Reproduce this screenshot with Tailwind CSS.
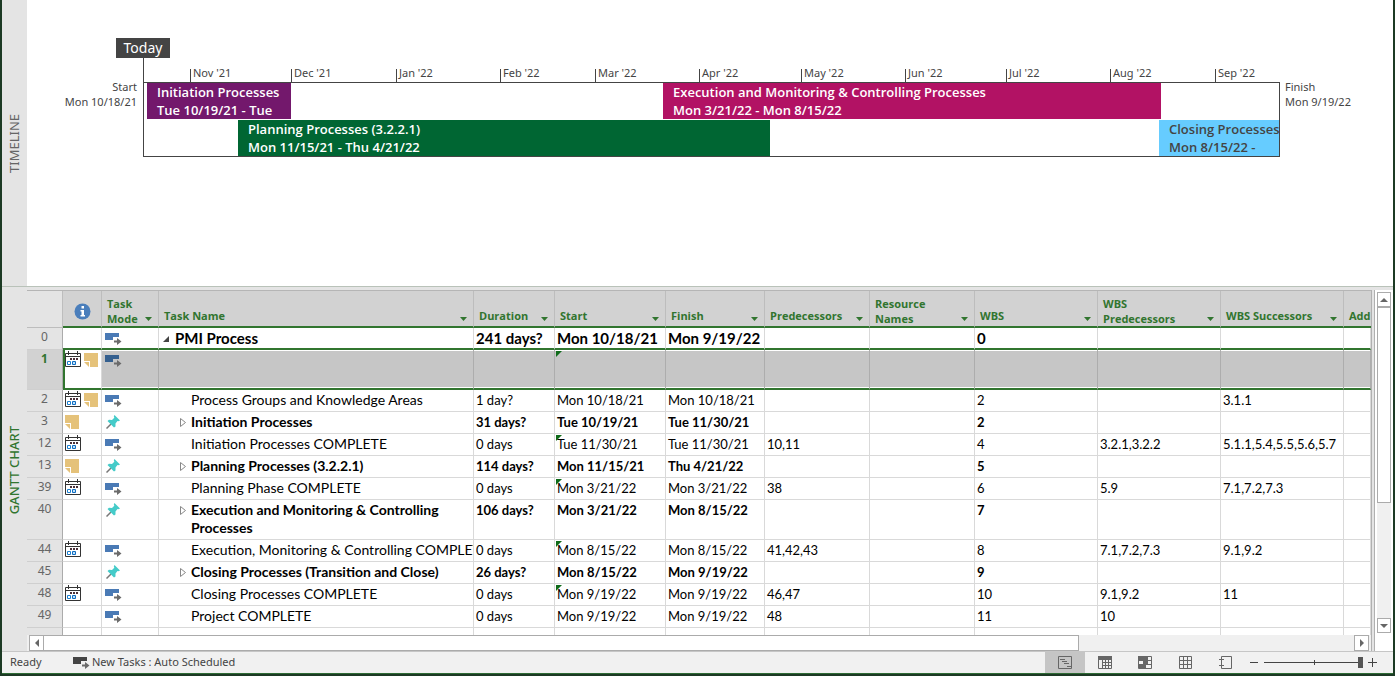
<!DOCTYPE html>
<html lang="en">
<head>
<meta charset="utf-8">
<title>Project plan</title>
<script src="https://cdn.jsdelivr.net/npm/@tailwindcss/browser@4"></script>
</head>
<body class="bg-[#1c3a24] font-['Noto_Sans','Open_Sans',sans-serif] text-[#444]">
<svg class="hidden" aria-hidden="true">
  <symbol id="cal" viewBox="0 0 16 16">
    <path d="M.5 2.5h15v13H.5zM.5 5.500h15" fill="#fff" stroke="#333"/>
    <path d="M3.500 0v4M12.500 0v4" stroke="#333"/>
    <path d="M5 7h2v2H5zM8 7h2v2H8zM11 7h2v2h-2z" fill="#4a3038"/>
    <path d="M2.500 10.500h3v3h-3z" fill="#fff" stroke="#1a7fd0"/><path d="M7.500 10.500h3v3h-3z" fill="#bfe0f8" stroke="#0f6cc0"/>
  </symbol>
  <symbol id="note" viewBox="0 0 14 14">
    <path d="M0 0h14v14H6V8H0z" fill="#e5c27a"/><path d="M0 9h5v5z" fill="#e5c27a"/>
  </symbol>
  <symbol id="auto" viewBox="0 0 17 12">
    <path d="M0 0h14v4H8v3H0z" fill="currentColor"/>
    <path d="M9 7.500h3V5L16.500 8.500 12 12V9.500H9z" fill="#6b6b6b"/>
  </symbol>
  <symbol id="pin" viewBox="0 0 14 14">
    <path d="M.500 13.500 5 9" stroke="#777" stroke-width="1.500"/>
    <path d="M8.500 0 14 5.500 12.500 6.200 11.500 6 9.500 8.500V11.500L8 12.500 1.500 6 3 4.800 6 5 8.300 2.800 7.800 1.200z" fill="#45cbc9"/>
  </symbol>
</svg>
<div class="mx-0.5 flex h-[calc(100vh-2px)] flex-col border-b border-[#2f6b35] bg-[#e4e4e4]">
  <section aria-label="Timeline" class="flex h-[286px] shrink-0 bg-white">
    <div class="flex w-[25px] items-center justify-center bg-[#e4e4e4] pr-0.5">
      <h2 class="rotate-180 text-[13px] leading-4 text-[#666] [writing-mode:vertical-rl]">TIMELINE</h2>
    </div>
    <div class="flex-1 pt-[38px]">
      <div class="pl-[89px]"><div class="flex h-5 w-[54px] items-center justify-center bg-[#444] text-sm text-white">Today</div></div>
      <div class="flex">
        <div class="w-[116px] pt-[21px] pr-1.5 text-right text-[11px] leading-[15px]">Start<br>Mon 10/18/21</div>
        <div class="min-w-0 flex-1 border-l border-[#444]">
          <div class="grid grid-cols-[46fr_101fr_105fr_104fr_95fr_104fr_102fr_104fr_101fr_104fr_105fr_65fr] pt-[11px] text-[11px] leading-2 [&>span]:h-[13px] [&>span]:border-l [&>span]:border-[#444] [&>span]:pl-0.5">
            <i></i><span>Nov '21</span><span>Dec '21</span><span>Jan '22</span><span>Feb '22</span><span>Mar '22</span><span>Apr '22</span><span>May '22</span><span>Jun '22</span><span>Jul '22</span><span>Aug '22</span><span>Sep '22</span>
          </div>
          <div class="flex flex-col gap-px border-y border-r border-[#444] font-['Open_Sans','Noto_Sans',sans-serif] text-[13px] leading-[18px] font-semibold whitespace-nowrap text-white">
            <div class="grid grid-cols-[3fr_144fr_372fr_498fr_118fr]">
              <div class="col-start-2 h-9 overflow-hidden bg-[#73186c] pl-2.5">Initiation Processes<br>Tue 10/19/21 - Tue</div>
              <div class="col-start-4 h-9 overflow-hidden bg-[#b21264] pl-2.5">Execution and Monitoring &amp; Controlling Processes<br>Mon 3/21/22 - Mon 8/15/22</div>
            </div>
            <div class="grid grid-cols-[94fr_532fr_389fr_120fr]">
              <div class="col-start-2 h-9 overflow-hidden bg-[#006633] pl-2.5">Planning Processes (3.2.2.1)<br>Mon 11/15/21 - Thu 4/21/22</div>
              <div class="col-start-4 h-9 overflow-hidden bg-[#66ccff] pl-2.5 text-[#444]">Closing Processes<br>Mon 8/15/22 -</div>
            </div>
          </div>
        </div>
        <div class="w-[113px] pt-[21px] pl-[5px] text-[11px] leading-[15px]">Finish<br>Mon 9/19/22</div>
      </div>
    </div>
  </section>
  <div class="h-1 shrink-0 border-t border-[#b9c2b9]"></div>
  <section aria-label="Gantt chart" class="flex min-h-0 flex-1">
    <div class="flex w-[25px] items-center justify-center pr-0.5">
      <h2 class="rotate-180 text-[13px] leading-4 font-medium text-[#31752f] [writing-mode:vertical-rl]">GANTT CHART</h2>
    </div>
    <div class="flex min-w-0 flex-1 flex-col">
      <div class="min-h-0 flex-1 overflow-hidden border-t border-[#b5b5b5] bg-white">
        <table class="w-full table-fixed border-separate border-spacing-0 font-[Lato,sans-serif] text-[13px] leading-[18px] text-black">
          <colgroup><col class="w-9"><col class="w-[39px]"><col class="w-[57px]"><col><col class="w-[81px]"><col class="w-[111px]"><col class="w-[99px]"><col class="w-[105px]"><col class="w-[105px]"><col class="w-[123px]"><col class="w-[123px]"><col class="w-[123px]"><col class="w-[27px]"></colgroup>
          <thead><tr id="head"></tr></thead>
          <tbody id="body"></tbody>
        </table>
      </div>
      <div class="flex h-4 shrink-0 items-stretch bg-[#f0f0f0]" role="group" aria-label="Horizontal scroll">
        <button aria-label="Scroll left" class="ml-0.5 flex w-[15px] items-center justify-center border border-[#ababab] bg-white"><svg width="4" height="8"><path d="M4 0v8L0 4z" fill="#666"/></svg></button>
        <div class="flex flex-1"><div class="w-[79%] border border-l-0 border-[#ababab] bg-white"></div></div>
        <button aria-label="Scroll right" class="mr-0.5 flex w-[15px] items-center justify-center border border-[#ababab] bg-white"><svg width="4" height="8"><path d="M0 0v8l4-4z" fill="#666"/></svg></button>
      </div>
    </div>
    <div class="w-1 border-x border-[#b0b0b0] bg-[#e4e4e4]"></div>
    <div class="flex w-[18px] flex-col bg-white pt-0.5 pr-0.5 pb-[18px] pl-0.5" role="group" aria-label="Vertical scroll">
      <button aria-label="Scroll up" class="flex h-[15px] items-center justify-center border border-[#ababab] bg-white"><svg width="8" height="4"><path d="M0 4h8L4 0z" fill="#666"/></svg></button>
      <div class="flex-1 bg-[#f0f0f0]"><div class="h-[63%] border border-[#ababab] bg-white"></div></div>
      <button aria-label="Scroll down" class="flex h-[15px] items-center justify-center border border-[#ababab] bg-white"><svg width="8" height="4"><path d="M0 0h8L4 4z" fill="#666"/></svg></button>
    </div>
  </section>
  <footer class="flex h-[22px] shrink-0 items-center border-t border-[#c6c6c6] bg-[#f1f1f1] text-[11px]">
    <span class="w-[71px] pl-2">Ready</span>
    <svg width="17" height="12" class="mr-0.5 text-[#444]"><use href="#auto"/></svg>
    <button class="flex-1 text-left">New Tasks : Auto Scheduled</button>
    <div class="flex self-stretch">
      <button aria-label="Gantt chart view" class="flex w-10 items-center justify-center bg-[#c5c5c5]"><svg width="14" height="13" fill="none" stroke="#666"><path d="M.5.5h13v12H.5zM2 3.500h5M4 5.500h5M6 7.500h5M9 10.500h4"/></svg></button>
      <button aria-label="Task usage view" class="flex w-10 items-center justify-center"><svg width="14" height="13" fill="none" stroke="#666"><path d="M.5 4v8.500h13V4M4 6.500h9M4 9.500h9M4.500 3v9M7.500 3v9M10.500 3v9"/><path d="M0 0h14v4H0z" fill="#666" stroke="none"/></svg></button>
      <button aria-label="Team planner view" class="flex w-10 items-center justify-center"><svg width="14" height="13" fill="none" stroke="#666"><path d="M.5.5h13v12H.5zM0 4.500h14M0 8.500h14M4.500 8v4"/><path d="M0 0h10v4H0zM5 5h5v3H5zM0 9h8v3H0z" fill="#666" stroke="none"/></svg></button>
      <button aria-label="Resource sheet view" class="flex w-10 items-center justify-center"><svg width="13" height="13" fill="none" stroke="#666"><path d="M.5.5h12v12H.5zM0 4.500h13M0 8.500h13M4.500 0v13M8.500 0v13"/></svg></button>
      <button aria-label="Report view" class="flex w-10 items-center justify-center"><svg width="13" height="13" fill="none" stroke="#666"><path d="M2.500 2V.5h10v12h-10V11M2.500 5v3M0 3.500h5M0 9.500h5M2.500 2v3M2.500 8v3"/></svg></button>
    </div>
    <button aria-label="Zoom out" class="ml-[5px] flex h-4 w-[9px] items-center"><svg width="9" height="9" stroke="#444"><path d="M0 4.500h8"/></svg></button>
    <label class="relative mx-[5px] flex items-center" aria-label="Zoom">
      <input type="range" aria-label="Zoom" value="100" class="h-[11px] w-[99px] appearance-none bg-[linear-gradient(#444,#444)] bg-[length:100%_1px] bg-center bg-no-repeat [&::-webkit-slider-thumb]:h-[11px] [&::-webkit-slider-thumb]:w-[5px] [&::-webkit-slider-thumb]:appearance-none [&::-webkit-slider-thumb]:bg-[#555]">
      <span class="absolute left-1/2 h-[5px] w-px bg-[#444]"></span>
    </label>
    <button aria-label="Zoom in" class="mr-4 flex h-4 w-[9px] items-center"><svg width="9" height="9" stroke="#444"><path d="M0 4.500h9M4.500 0v9"/></svg></button>
  </footer>
</div>
<script>
const icon = (id, w, h, cls) => `<svg width="${w}" height="${h}" class="${cls}" aria-hidden="true"><use href="#${id}"/></svg>`;

const heads = ['Task<br>Mode', 'Task Name', 'Duration', 'Start', 'Finish', 'Predecessors', 'Resource<br>Names', 'WBS', 'WBS<br>Predecessors', 'WBS Successors', 'Add'];
document.getElementById('head').innerHTML =
  '<th class="border-r border-b border-[#bdbdbd] bg-[#e4e4e4]"></th>' +
  '<th class="border-r border-b-2 border-r-[#bdbdbd] border-b-[#31752f] bg-[#d2d2d2]"><svg width="17" height="17" class="mx-auto mt-1.5" role="img" aria-label="Indicators"><circle cx="8.500" cy="8.500" r="8" fill="#4a7ebb"/><path d="M7.500 3h2.500v2.500H7.500zM6.500 7H10v5h1v1.500H6.500V12h1V8.500h-1z" fill="#fff"/></svg></th>' +
  heads.map((h) => `<th class="h-[37px] overflow-hidden border-b-2 border-r-[#bdbdbd] border-b-[#31752f] bg-[#d2d2d2] p-0 align-bottom font-['Open_Sans','Noto_Sans',sans-serif] text-[11px] leading-[15px] font-bold text-[#31752f] ${h === 'Add' ? '' : 'border-r'}"><div class="flex items-end justify-between pl-[5px] text-left whitespace-nowrap ${h === 'Add' ? '' : 'pr-1.5'} ${h.includes('<br>') ? 'pb-0' : 'pb-[3px]'}"><span>${h}</span>${h === 'Add' ? '' : `<button aria-label="Filter" class="${h.includes('<br>') ? 'pb-[5px]' : 'pb-0.5'}"><svg width="7" height="4"><path d="M0 0h7L3.500 4z" fill="#31752f"/></svg></button>`}</div></th>`).join('');

// id, indicators, mode, name, duration, start, finish, predecessors, resources, WBS, WBS predecessors, WBS successors
const rows = [
  ['0', '', 'auto', 'PMI Process', '241 days?', 'Mon 10/18/21', 'Mon 9/19/22', '', '', '0', '', ''],
  ['1', 'cn', 'auto', '', '', '', '', '', '', '', '', ''],
  ['2', 'cn', 'auto', 'Process Groups and Knowledge Areas', '1 day?', 'Mon 10/18/21', 'Mon 10/18/21', '', '', '2', '', '3.1.1'],
  ['3', 'n', 'pin', 'Initiation Processes', '31 days?', 'Tue 10/19/21', 'Tue 11/30/21', '', '', '2', '', ''],
  ['12', 'c', 'auto', 'Initiation Processes COMPLETE', '0 days', 'Tue 11/30/21', 'Tue 11/30/21', '10,11', '', '4', '3.2.1,3.2.2', '5.1.1,5.4,5.5,5.6,5.7'],
  ['13', 'n', 'pin', 'Planning Processes (3.2.2.1)', '114 days?', 'Mon 11/15/21', 'Thu 4/21/22', '', '', '5', '', ''],
  ['39', 'c', 'auto', 'Planning Phase COMPLETE', '0 days', 'Mon 3/21/22', 'Mon 3/21/22', '38', '', '6', '5.9', '7.1,7.2,7.3'],
  ['40', '', 'pin', 'Execution and Monitoring &amp; Controlling Processes', '106 days?', 'Mon 3/21/22', 'Mon 8/15/22', '', '', '7', '', ''],
  ['44', 'c', 'auto', 'Execution, Monitoring &amp; Controlling COMPLETE', '0 days', 'Mon 8/15/22', 'Mon 8/15/22', '41,42,43', '', '8', '7.1,7.2,7.3', '9.1,9.2'],
  ['45', '', 'pin', 'Closing Processes (Transition and Close)', '26 days?', 'Mon 8/15/22', 'Mon 9/19/22', '', '', '9', '', ''],
  ['48', 'c', 'auto', 'Closing Processes COMPLETE', '0 days', 'Mon 9/19/22', 'Mon 9/19/22', '46,47', '', '10', '9.1,9.2', '11'],
  ['49', '', 'auto', 'Project COMPLETE', '0 days', 'Mon 9/19/22', 'Mon 9/19/22', '48', '', '11', '10', ''],
  ['', '', '', '', '', '', '', '', '', '', '', ''],
];
const corner = '<svg width="6" height="6" class="absolute top-px left-px" aria-hidden="true"><path d="M0 0h6L0 6z" fill="#0f6b1a"/></svg>';
document.getElementById('body').innerHTML = rows.map(([id, ind, mode, name, ...rest]) => {
  const sel = id === '1', root = id === '0', sum = mode === 'pin';
  const line = root || sel ? 'border-b-2 border-b-[#31752f]' : 'border-b border-b-[#d9d9d9]';
  const h = sel || id === '40' ? 'h-10' : 'h-[22px]';
  const td = `relative overflow-hidden border-r p-0 pt-px align-top whitespace-nowrap ${line} ${sel ? 'border-r-[#adadad] bg-[#c6c6c6] shadow-[inset_0_1px_#fff,inset_0_-1px_#fff]' : 'border-r-[#d9d9d9]'}`;
  const arrow = root ? '<svg width="7" height="6" class="mt-[7px] mr-[5px] ml-1 shrink-0"><path d="M6 0v6H0z" fill="#444"/></svg>'
    : sum ? '<svg width="7" height="9" class="mt-[5px] mr-1 ml-[21px] shrink-0" fill="#fff" stroke="#888"><path d="M.5.500v8l5-4z"/></svg>' : '<span class="w-8 shrink-0"></span>';
  const size = root ? 'text-[15px] font-bold' : sum ? 'font-bold' : '';
  return `<tr class="${h} ${size}">
    <td class="border-r border-b border-r-[#ababab] border-b-[#cfcfcf] p-0 align-top text-center font-['Noto_Sans','Open_Sans',sans-serif] text-xs leading-[18px] ${sel ? 'bg-[#d2d2d2] font-bold text-[#31752f]' : 'bg-[#e4e4e4] font-normal text-[#666]'}">${id}</td>
    <td class="border-r border-r-[#d9d9d9] ${line} ${sel ? 'border-l-2 border-l-[#31752f]' : ''} p-0 pt-px align-top"><div class="flex gap-[3px] ${sel ? '' : 'pl-0.5'}">${ind.includes('c') ? icon('cal', 16, 16, '') : ''}${ind.includes('n') ? icon('note', 14, 14, 'mt-0.5') : ''}</div></td>
    <td class="${td}">${mode === 'pin' ? icon('pin', 14, 14, 'mt-0.5 ml-1') : mode ? icon('auto', 17, 12, sel ? 'mt-1 ml-[3px] text-[#35608f]' : 'mt-1 ml-[3px] text-[#4a7ab5]') : ''}</td>
    <td class="${td}"><div class="flex ${root ? '' : 'text-sm leading-[18px]'} ${id === '40' ? 'whitespace-normal' : ''}">${name ? arrow : ''}<span>${name}</span></div></td>
    ${rest.map((t, i) => `<td class="${td} pl-0.5">${i === 1 && (sel || ['12', '39', '44', '48'].includes(id)) ? corner : ''}${t}</td>`).join('')}
    <td class="${td}"></td></tr>`;
}).join('');
</script>
</body>
</html>
